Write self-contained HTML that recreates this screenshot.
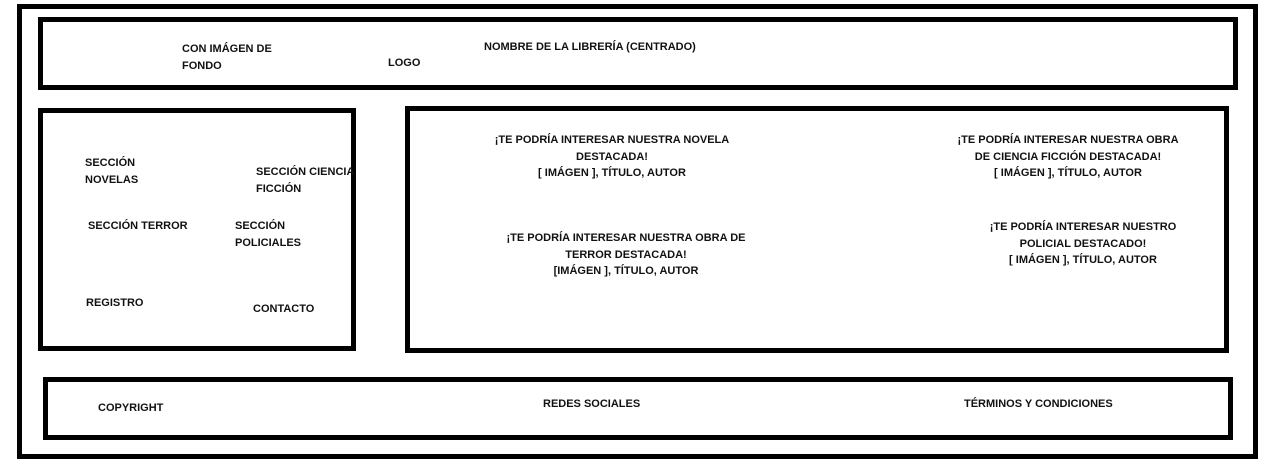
<!DOCTYPE html>
<html><head><meta charset="utf-8"><style>
*{margin:0;padding:0;box-sizing:border-box}
body{width:1281px;height:460px;background:#fff;position:relative;overflow:hidden;font-family:"Liberation Sans",Arial,sans-serif;font-weight:bold;font-size:11px;color:#111}
.b{position:absolute;border:5px solid #000}
.t{position:absolute;line-height:16.5px;white-space:nowrap}
.c{text-align:center;width:360px}
</style></head><body>
<div class="b" style="left:17px;top:4px;width:1241px;height:455px"></div>
<div class="b" style="left:38px;top:17px;width:1200px;height:73px"></div>
<div class="b" style="left:38px;top:108px;width:318px;height:243px"></div>
<div class="b" style="left:405px;top:106px;width:824px;height:247px"></div>
<div class="b" style="left:43px;top:377px;width:1190px;height:63px"></div>

<div class="t" style="left:182px;top:41px">CON IMÁGEN DE<br>FONDO</div>
<div class="t" style="left:388px;top:55px">LOGO</div>
<div class="t" style="left:484px;top:39px">NOMBRE DE LA LIBRERÍA (CENTRADO)</div>

<div class="t" style="left:85px;top:155px">SECCIÓN<br>NOVELAS</div>
<div class="t" style="left:256px;top:164px">SECCIÓN CIENCIA<br>FICCIÓN</div>
<div class="t" style="left:88px;top:218px">SECCIÓN TERROR</div>
<div class="t" style="left:235px;top:218px">SECCIÓN<br>POLICIALES</div>
<div class="t" style="left:86px;top:295px">REGISTRO</div>
<div class="t" style="left:253px;top:301px">CONTACTO</div>

<div class="t c" style="left:432px;top:132px">¡TE PODRÍA INTERESAR NUESTRA NOVELA<br>DESTACADA!<br>[ IMÁGEN ], TÍTULO, AUTOR</div>
<div class="t c" style="left:888px;top:132px">¡TE PODRÍA INTERESAR NUESTRA OBRA<br>DE CIENCIA FICCIÓN DESTACADA!<br>[ IMÁGEN ], TÍTULO, AUTOR</div>
<div class="t c" style="left:446px;top:230px">¡TE PODRÍA INTERESAR NUESTRA OBRA DE<br>TERROR DESTACADA!<br>[IMÁGEN ], TÍTULO, AUTOR</div>
<div class="t c" style="left:903px;top:219px">¡TE PODRÍA INTERESAR NUESTRO<br>POLICIAL DESTACADO!<br>[ IMÁGEN ], TÍTULO, AUTOR</div>

<div class="t" style="left:98px;top:400px">COPYRIGHT</div>
<div class="t" style="left:543px;top:396px">REDES SOCIALES</div>
<div class="t" style="left:964px;top:396px">TÉRMINOS Y CONDICIONES</div>
</body></html>
